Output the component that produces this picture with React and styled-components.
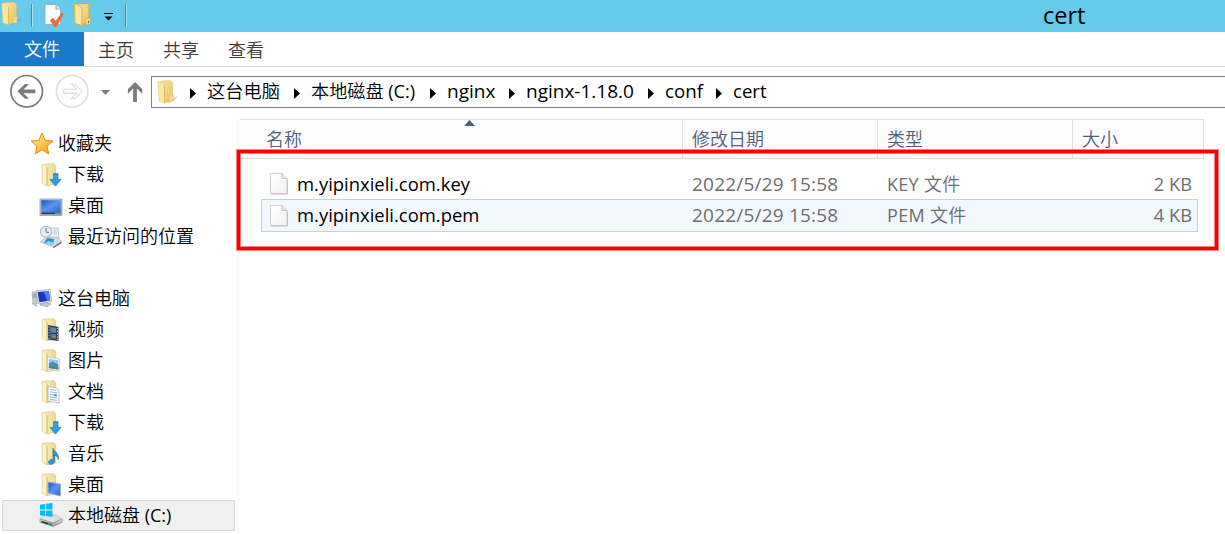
import React from "react";
import styled, { createGlobalStyle } from "styled-components";

const Global = createGlobalStyle`
  * { box-sizing: border-box; }
  html, body { margin: 0; background: #fff; overflow: hidden; }
  body {
    font-family: "Open Sans", "Noto Sans CJK SC", sans-serif;
    font-size: 18px;
    line-height: 24px;
    color: #000;
  }
  svg { display: block; flex: none; }
`;

const Window = styled.div`
  width: 1225px;
  height: 534px;
  display: flex;
  flex-direction: column;
  overflow: hidden;
`;

const TitleBar = styled.header`
  height: 32px;
  flex: none;
  display: flex;
  background: #66caea;
`;

const QuickAccess = styled.div`
  width: 1043px;
  flex: none;
`;

const Title = styled.h1`
  margin: 0;
  font-size: 23.5px;
  line-height: 31px;
  font-weight: 400;
`;

const Tabs = styled.nav`
  height: 35px;
  flex: none;
  display: flex;
  border-bottom: 1px solid #dadbdc;
  font-weight: 350;
`;

const Tab = styled.span`
  width: 65px;
  padding-left: 14px;
  line-height: 36px;
  color: #3a3a3a;
  white-space: nowrap;
`;

const FileTab = styled(Tab)`
  width: 84px;
  padding-left: 24px;
  background: #1979ca;
  color: #fff;
  line-height: 35px;
`;

const AddressRow = styled.div`
  height: 52px;
  flex: none;
  display: flex;
  padding-top: 9px;
`;

const NavButtons = styled.div`
  width: 151px;
  flex: none;
`;

const AddressBox = styled.div`
  flex: 1;
  height: 32px;
  display: flex;
  align-items: center;
  border: 1px solid #7f7f7f;
  border-right: 0;
  padding-left: 4px;
`;

const Crumb = styled.span`
  width: ${(p) => p.$width}px;
  flex: none;
  font-size: ${(p) => p.$size}px;
  font-weight: 350;
  white-space: nowrap;
  line-height: 26px;
  margin-bottom: 2px;
`;

const CrumbArrow = styled.svg`
  margin: 2px 11px 0 14px;
`;

const Body = styled.div`
  flex: 1;
  display: flex;
  min-height: 0;
`;

const Sidebar = styled.aside`
  width: 240px;
  flex: none;
  padding: 9px 0 0 2px;
  display: flex;
  flex-direction: column;
  gap: 31px;
  border-right: 4px solid #fafafa;
`;

const Group = styled.div`
  display: flex;
  flex-direction: column;
`;

const NavItem = styled.div`
  width: 233px;
  height: 31px;
  display: flex;
  align-items: center;
  gap: ${(p) => (p.$root ? 4 : 5)}px;
  padding-left: ${(p) => (p.$root ? 27 : 36)}px;
  border: 1px solid ${(p) => (p.$selected ? "#d9d9d9" : "transparent")};
  background: ${(p) => (p.$selected ? "#f0f0f0" : "transparent")};
  white-space: nowrap;
`;

const NavLabel = styled.span`
  margin-bottom: 1px;
  font-weight: 350;
`;

/* Latin runs keep the regular weight beside the lighter Chinese glyphs */
const Latin = styled.span`
  font-weight: 400;
`;

const Mixed = ({ text }) =>
  text.split(/([\x20-\x7e]+)/).map((run, i) => (i % 2 ? <Latin key={i}>{run}</Latin> : run));

const Files = styled.main`
  flex: 1;
  position: relative;
  display: flex;
  flex-direction: column;
`;

const HeaderRow = styled.div`
  width: 964px;
  height: 40px;
  flex: none;
  display: flex;
  border: 1px solid #dedfe1;
  border-left: 0;
  background: #fcfcfc;
`;

const HeaderCell = styled.div`
  width: ${(p) => p.$width}px;
  flex: none;
  padding: 7px 0 0 ${(p) => p.$pad || 9}px;
  border-right: ${(p) => (p.$last ? 0 : 1)}px solid #dedfe1;
  color: #4c607a;
  font-weight: 350;
  display: flex;
`;

const SortMark = styled.svg`
  margin: -7px 0 0 162px;
`;

const FileList = styled.div`
  display: flex;
  flex-direction: column;
  padding: 9px 0 0 21px;
`;

const FileRow = styled.div`
  width: 937px;
  height: ${(p) => (p.$hover ? 33 : 31)}px;
  display: flex;
  align-items: center;
  border: 1px solid ${(p) => (p.$hover ? "#b8d2f4" : "transparent")};
  background: ${(p) => (p.$hover ? "#f3f8fe" : "transparent")};
  padding: 0 5px 0 7px;
  color: #6d6d6d;
  white-space: nowrap;

  > span { margin-bottom: ${(p) => (p.$hover ? 2 : 0)}px; }
`;

const FileName = styled.span`
  width: 395px;
  margin-left: 8px;
  color: #000;
  font-size: 18.45px;
`;

const FileDate = styled.span`
  width: 195px;
  font-size: 19px;
  letter-spacing: 0.2px;
`;

const FileType = styled.span`
  flex: 1;
  font-weight: 350;
  letter-spacing: 0.3px;
`;

const FileSize = styled.span`
  font-size: 18.3px;
`;

const Highlight = styled.div`
  position: absolute;
  left: -3px;
  top: 31px;
  width: 981px;
  height: 100px;
  border: 3px solid #f00;
  box-shadow: 0 0 0 1px rgba(255, 0, 0, 0.5), inset 0 0 0 1px rgba(255, 0, 0, 0.5);
`;

/* ---- icons ---- */

const Defs = styled.svg`
  position: absolute;
`;

const Gradients = () => (
  <Defs width="0" height="0">
    <defs>
      <linearGradient id="flap" x1="0" x2="1" y1="0" y2="1">
        <stop offset="0" stopColor="#fbe9a6" />
        <stop offset="1" stopColor="#e6c25c" />
      </linearGradient>
      <linearGradient id="pale" x1="0" x2="1">
        <stop offset="0" stopColor="#fcf1c4" />
        <stop offset="1" stopColor="#ecd891" />
      </linearGradient>
      <linearGradient id="star" x1="0" x2="1" y1="0" y2="1">
        <stop offset="0" stopColor="#fff6b0" />
        <stop offset=".55" stopColor="#fcc440" />
        <stop offset="1" stopColor="#f58a1c" />
      </linearGradient>
      <linearGradient id="screen" x1="0" x2="1" y1="0" y2="1">
        <stop offset="0" stopColor="#1d52c4" />
        <stop offset=".5" stopColor="#5a94f0" />
        <stop offset="1" stopColor="#2a62d4" />
      </linearGradient>
      <linearGradient id="metal" x1="0" x2="0" y1="0" y2="1">
        <stop offset="0" stopColor="#e4e6e7" />
        <stop offset="1" stopColor="#8b9092" />
      </linearGradient>
      <linearGradient id="paper" x1="0" x2="1" y1="0" y2="1">
        <stop offset="0" stopColor="#fff" />
        <stop offset="1" stopColor="#f1f1f1" />
      </linearGradient>
    </defs>
  </Defs>
);

const FolderShape = () => (
  <g>
    <path d="M14 20 22 16 18 20.5 11 23.5z" fill="#55708a" opacity=".35" />
    <path d="M2.5 2 7 .8H14.5L16.5 2.5V20L8.500 23z" fill="url(#flap)" stroke="#dfbb5c" strokeWidth=".5" />
    <path d="M13 15h4.200v6L13 22z" fill="#f4dd88" stroke="#dcb658" strokeWidth=".5" />
    <path d="M1.800 2 5 1.500l3.500 4V23.200L3 21.300z" fill="#f9e6a3" stroke="#e6c870" strokeWidth=".5" />
    <path d="M8.500 5.500v17.500" stroke="#d9b14e" strokeWidth=".8" />
  </g>
);

const QuickIcons = () => (
  <svg width="140" height="32" viewBox="0 0 140 32">
    <path d="M31.5 4v23M125.5 4v23" stroke="#4a8aa4" />
    <path d="M32.5 4v23M126.5 4v23" stroke="#a9e2f4" />
    <g transform="translate(0 1.5)"><FolderShape /></g>
    <path d="M45 4.5h11l4.5 4.5v15.5H45z" fill="#fbfbfb" stroke="#98aab2" strokeWidth=".8" />
    <path d="M56 4.5V9h4.5" fill="#dce3e6" stroke="#8b999f" strokeWidth=".8" />
    <path d="M50.2 20.5 53 18l2.400 3.400L61.800 13l1.600 1.100-7 12.400h-2z" fill="#ee6b3b" stroke="#d8572a" strokeWidth=".5" />
    <path d="M75 4.500 79 3.500h8.500l1.500 1.500V21l-6.500 4z" fill="url(#flap)" stroke="#e3a72a" />
    <path d="M86 18.500h4.200V24L86 25z" fill="#fae69a" stroke="#e9ad25" strokeWidth=".7" />
    <path d="M87.900 20.500h1.200v2.800h-1.200z" fill="#3e86cc" />
    <path d="M74.500 4.500 77.500 4l4.500 4v17.500l-7-2z" fill="#fbe7a0" stroke="#e9ad25" strokeWidth=".9" />
    <path d="M104 13.5h9" stroke="#000" />
    <path d="M104.5 16.5h8l-4 4z" fill="#000" />
  </svg>
);

const NavButtonIcons = () => (
  <svg width="151" height="36" viewBox="0 76 151 36" overflow="visible">
    <circle cx="26.7" cy="91.3" r="15.8" fill="#fff" stroke="#7b7b7b" strokeWidth="1.7" />
    <path d="M17.3 91.3 25 83.9h4l-5.400 5.500H35.400v3.800H23.600l5.400 5.600h-4z" fill="#7b7b7b" />
    <circle cx="72.2" cy="91.3" r="15.8" fill="#fff" stroke="#dedede" strokeWidth="1.6" />
    <path d="M82.3 91.3 74.8 84H71.400l5.300 5.200H63.700v4.200h13L71.400 98.600h3.400z" fill="#fff" stroke="#dedede" strokeWidth="1.1" />
    <path d="M101 90h9l-4.500 5z" fill="#7b7b7b" />
    <path d="M135 82 142.3 89.2v4.500l-5.400-5.200V102h-3.800V88.500l-5.200 5.200v-4.500z" fill="#7b7b7b" />
  </svg>
);

const AddressFolder = () => (
  <svg width="20" height="25" viewBox="0 0 20 25" overflow="visible"><FolderShape /></svg>
);

const Arrow = () => (
  <CrumbArrow width="6" height="11" viewBox="0 0 6 11"><path d="M0 0 6 5.5 0 11z" fill="#000" /></CrumbArrow>
);

const BASE = (
  <g>
    <path d="M3.500 1.700 7.500.8H15l1.700 1.700V21L8 22.800z" fill="url(#pale)" stroke="#dcc274" strokeWidth=".6" />
    <path d="M3.200 1.700 5.500 1.300 8 4.500V22.800L3.200 20.500z" fill="#fcf2c9" stroke="#dfc880" strokeWidth=".6" />
    <path d="M8.200 4.500V22.500" stroke="#d3b460" strokeWidth=".7" />
  </g>
);

const icons = {
  star: (
    <path d="m12 1 3.100 7.300 7.900.7-6 5.200 1.900 7.800L12 17.800 5.200 22 7 14.200 1 9l7.900-.7z" fill="url(#star)" stroke="#e88b21" strokeWidth="1" />
  ),
  download: (
    <g>{BASE}<path d="M14.500 10.500h4.500v6h3.200l-5.700 6.700-5.600-6.700h3.600z" fill="#2b9fe0" stroke="#197bbb" strokeWidth=".6" /></g>
  ),
  desktop: (
    <g>
      <path d="M1 5h22v16.500H1z" fill="#b8c6d5" stroke="#8294a8" strokeWidth=".7" />
      <path d="M2.300 6.200h19.400v12H2.300z" fill="url(#screen)" />
      <path d="M2.300 18.300h19.400v2H2.300z" fill="#22445f" />
      <path d="M16 19.300h5" stroke="#8aa5b8" />
    </g>
  ),
  recent: (
    <g>
      <path d="M10 3h9l1 12H9z" fill="#eef2f5" stroke="#a7b6c2" strokeWidth=".7" />
      <path d="M14.500 4.500h3.500v5h-3.500z" fill="#cfdde7" />
      <circle cx="7" cy="6.800" r="5.500" fill="#e4eef4" stroke="#b0bdc6" strokeWidth="1.200" />
      <path d="M7 3v4.300h3" fill="none" stroke="#607b8b" />
      <path d="m1.500 17 5-5h12l4 4.500-8 5.500z" fill="#d3d9dd" stroke="#a4aeb5" strokeWidth=".6" />
      <path d="m5 18 3-5 7 1-1 6z" fill="#2793d0" />
      <path d="m5.500 18 4-2 5 1.500-.5 2.500z" fill="#8ed3ee" />
      <path d="m14 22 8.500-5.500v2L14 23.300z" fill="#6b757a" />
    </g>
  ),
  computer: (
    <g>
      <path d="M2 5h5v12l-4-1.500z" fill="#c5cbd0" stroke="#98a1a7" strokeWidth=".6" />
      <path d="M3 8h3M3 10h3" stroke="#7a858d" />
      <path d="m6 3.500 14-1 1.700 12.200L8.500 17z" fill="#e6e9ec" stroke="#9ba5ad" strokeWidth=".7" />
      <path d="m7.600 4.900 11.200-.9 1.400 9.600-10.800 1.600z" fill="#1933c4" />
      <path d="m13.500 4.400 5.300-.4 1.400 9.600-2.900.5z" fill="#4e7cf0" />
      <path d="m10 18 5-2.800 6 1.800-4 3z" fill="#c2c8cc" stroke="#929da4" strokeWidth=".6" />
      <path d="m2 16 5 3" stroke="#b5bcc1" strokeWidth="1.5" />
    </g>
  ),
  video: (
    <g>
      {BASE}
      <path d="m9 7 10.500 2v14L9 21.500z" fill="#37393d" />
      <path d="m11.300 9 6 1v5l-6-.8z" fill="#3a91c8" />
      <path d="m11.300 15.500 6 .8V21l-6-.8z" fill="#2f80b4" />
      <path d="m12 13 3-2.500 1.500 2zM12.500 19l3-2 1 2.600z" fill="#e46a2c" />
      <path d="M10.100 8.500v12.500M18.500 10v12" stroke="#cfd2d4" strokeWidth=".9" strokeDasharray="1.3 1.5" />
    </g>
  ),
  picture: (
    <g>
      {BASE}
      <path d="m8.500 8 12 2v12L8.500 20z" fill="#fff" stroke="#b8bec2" strokeWidth=".7" />
      <path d="m9.800 9.700 9.500 1.500v4l-9.500-1z" fill="#8fcbef" />
      <path d="m9.800 14 4-1.500 5.500 3v5l-9.500-1.500z" fill="#4b8fb0" />
      <path d="m9.800 17.500 9.500.5v2.500l-9.500-1.500z" fill="#4a8a68" />
    </g>
  ),
  document: (
    <g>
      {BASE}
      <path d="m9 6.500 8.500 1.300L20 10.500V23L9 21z" fill="#fafbfc" stroke="#a5adb3" strokeWidth=".7" />
      <path d="m11 9.500 6 .8m-6 1.600 7 .9m-7 1.600 4 .5m-4 2 7 .9m-7 1.600 7 .9" stroke="#8aa6bd" strokeWidth=".8" />
      <path d="m15 14 3 .4v2l-3-.4z" fill="#4b92cf" />
    </g>
  ),
  music: (
    <g>
      {BASE}
      <path d="M14 6c.5 3.500 6.500 4.500 5.500 11.500-.8-3-2.500-4-4-4.300V19c0 4-6 4.500-6 1.300 0-2.200 2.500-3.300 4.500-2.800z" fill="#2898dc" stroke="#1c6ba5" strokeWidth=".6" />
    </g>
  ),
  desktopFolder: (
    <g>
      {BASE}
      <path d="m9 9 12.500 2v12L9 20z" fill="url(#screen)" stroke="#a0afbf" strokeWidth="1" />
    </g>
  ),
  disk: (
    <g>
      <path d="m1 15 5-4h11l6 4-9 4z" fill="#dfe1e2" stroke="#a3a7a9" strokeWidth=".6" />
      <path d="m1 15 13 4 9-4v3.500l-9 4L1 18.500z" fill="url(#metal)" stroke="#777c7f" strokeWidth=".5" />
      <path d="m2.500 16.800 10 3v1.700l-10-3z" fill="#1c4937" />
      <path d="m9 19.200 2.500.8v1l-2.500-.8z" fill="#38e26f" />
      <path d="M1 .7 6.300 0v5.500H1zM7.200-.2 13.500-1v6.500H7.200zM1 6.400h5.300v5.500L1 11.200zM7.200 6.400h6.300v6.500l-6.300-.8z" fill="#00bdf2" />
    </g>
  ),
};

const NavIcon = ({ name }) => (
  <svg width="24" height="24" viewBox="0 0 24 24" overflow="visible">{icons[name]}</svg>
);

const FileIcon = () => (
  <svg width="20" height="23" viewBox="0 0 20 23">
    <path d="M1.500 1.500h11.500l5 5V21.500H1.500z" fill="url(#paper)" stroke="#d0d0d0" />
    <path d="M13 1.500v5h5" fill="#e6e6e6" stroke="#b5b5b5" strokeWidth=".8" />
    <path d="M2 22h16.500V8" fill="none" stroke="#aaa" strokeWidth=".6" />
  </svg>
);

const crumbs = [
  ["这台电脑", 73, 18.25],
  ["本地磁盘 (C:)", 105, 18.15],
  ["nginx", 48, 19],
  ["nginx-1.18.0", 108, 19],
  ["conf", 37, 18.7],
  ["cert", 33, 18.6],
];

const favorites = [["download", "下载"], ["desktop", "桌面"], ["recent", "最近访问的位置"]];

const computer = [
  ["video", "视频"], ["picture", "图片"], ["document", "文档"], ["download", "下载"],
  ["music", "音乐"], ["desktopFolder", "桌面"], ["disk", "本地磁盘 (C:)", true],
];

const files = [
  ["m.yipinxieli.com.key", "KEY 文件", "2 KB"],
  ["m.yipinxieli.com.pem", "PEM 文件", "4 KB", true],
];

export default function App() {
  return (
    <Window>
      <Global />
      <Gradients />
      <TitleBar>
        <QuickAccess><QuickIcons /></QuickAccess>
        <Title>cert</Title>
      </TitleBar>
      <Tabs>
        <FileTab>文件</FileTab>
        <Tab>主页</Tab>
        <Tab>共享</Tab>
        <Tab>查看</Tab>
      </Tabs>
      <AddressRow>
        <NavButtons><NavButtonIcons /></NavButtons>
        <AddressBox>
          <AddressFolder />
          {crumbs.map(([text, width, size]) => (
            <React.Fragment key={text}>
              <Arrow />
              <Crumb $width={width} $size={size}><Mixed text={text} /></Crumb>
            </React.Fragment>
          ))}
        </AddressBox>
      </AddressRow>
      <Body>
        <Sidebar>
          <Group>
            <NavItem $root><NavIcon name="star" /><NavLabel>收藏夹</NavLabel></NavItem>
            {favorites.map(([icon, text]) => (
              <NavItem key={text}><NavIcon name={icon} /><NavLabel>{text}</NavLabel></NavItem>
            ))}
          </Group>
          <Group>
            <NavItem $root><NavIcon name="computer" /><NavLabel>这台电脑</NavLabel></NavItem>
            {computer.map(([icon, text, selected]) => (
              <NavItem key={text} $selected={selected}>
                <NavIcon name={icon} />
                <NavLabel><Mixed text={text} /></NavLabel>
              </NavItem>
            ))}
          </Group>
        </Sidebar>
        <Files>
          <HeaderRow>
            <HeaderCell $width={443} $pad={26}>
              名称
              <SortMark width="11" height="6" viewBox="0 0 11 6"><path d="M5.5 0 11 6H0z" fill="#4c607a" /></SortMark>
            </HeaderCell>
            <HeaderCell $width={195}>修改日期</HeaderCell>
            <HeaderCell $width={195}>类型</HeaderCell>
            <HeaderCell $width={130} $last>大小</HeaderCell>
          </HeaderRow>
          <FileList>
            {files.map(([name, type, size, hover]) => (
              <FileRow key={name} $hover={hover}>
                <FileIcon />
                <FileName>{name}</FileName>
                <FileDate>2022/5/29 15:58</FileDate>
                <FileType><Mixed text={type} /></FileType>
                <FileSize>{size}</FileSize>
              </FileRow>
            ))}
          </FileList>
          <Highlight />
        </Files>
      </Body>
    </Window>
  );
}
